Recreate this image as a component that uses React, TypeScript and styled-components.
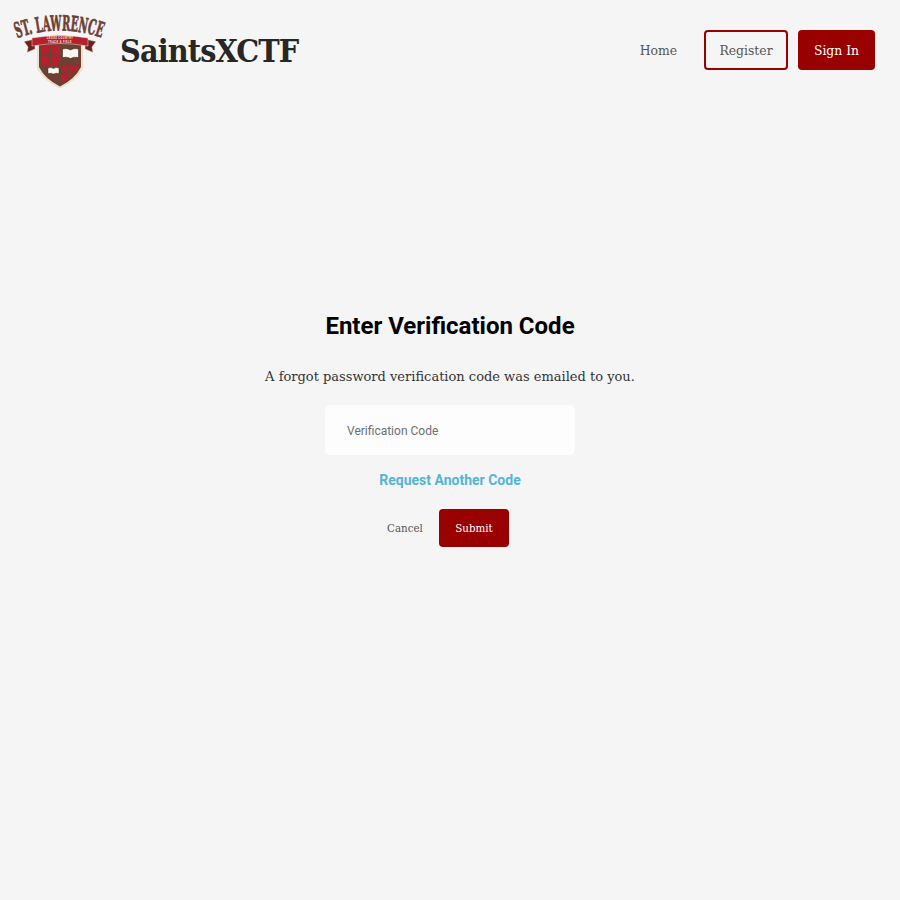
import React from "react";
import styled, { createGlobalStyle } from "styled-components";

const Global = createGlobalStyle`
  html, body { margin: 0; padding: 0; background: #f5f5f5; }
  #root { min-height: 900px; }
`;
const slab = `"DejaVu Serif", "Liberation Serif", serif`;

const Page = styled.div`
  width: 900px;
  height: 900px;
  background: #f5f5f5;
  display: flex;
  flex-direction: column;
`;
const Header = styled.header`
  height: 100px;
  display: flex;
  align-items: center;
  padding: 0 25px 0 15px;
  box-sizing: border-box;
`;
const Brand = styled.div`
  display: flex;
  align-items: center;
  gap: 15px;
  flex: 1;
`;
const LogoSvg = styled.svg`
  width: 90px;
  height: 76px;
  display: block;
  overflow: visible;
`;
const Title = styled.h1`
  margin: 2px 0 0;
  font: 700 32px/1 "DejaVu Serif Condensed", ${slab};
  color: #272727;
  letter-spacing: -0.9px;
`;
const Nav = styled.nav`
  display: flex;
  align-items: center;
  gap: 10px;
`;
const NavButton = styled.button<{ $variant: "plain" | "outline" | "solid" }>`
  height: 40px;
  box-sizing: border-box;
  border-radius: 4px;
  font: 400 12.4px/1 ${slab};
  padding: ${(p) => (p.$variant === "plain" ? "2px 0 0 3px" : "2px 0 0")};
  width: ${(p) => (p.$variant === "plain" ? "74px" : p.$variant === "outline" ? "84px" : "77px")};
  background: ${(p) => (p.$variant === "solid" ? "#990000" : "transparent")};
  color: ${(p) => (p.$variant === "solid" ? "#fff" : "#555")};
  border: ${(p) => (p.$variant === "outline" ? "2px solid #990000" : "none")};
`;
const Main = styled.main`
  display: flex;
  flex-direction: column;
  align-items: center;
  padding-top: 212px;
`;
const Heading = styled.h2`
  margin: 0;
  height: 28px;
  font: 700 24px/28px Roboto, sans-serif;
  color: #000;
`;
const Message = styled.p`
  margin: 27px 0 0;
  height: 20px;
  font: 400 13px/20px ${slab};
  color: #333;
`;
const CodeInput = styled.input`
  margin-top: 18px;
  width: 250px;
  height: 50px;
  box-sizing: border-box;
  border: none;
  outline: none;
  border-radius: 5px;
  background: #fdfdfd;
  padding: 1px 22px 0;
  font: 400 12px Roboto, sans-serif;
  color: #555;
  &::placeholder { color: #6f6f6f; opacity: 1; }
`;
const Resend = styled.a`
  margin-top: 16px;
  height: 18px;
  font: 700 14px/18px Roboto, sans-serif;
  color: #56b4d3;
  cursor: pointer;
`;
const Actions = styled.div`
  margin-top: 20px;
  padding-right: 4px;
  display: flex;
  align-items: center;
  gap: 16px;
`;
const CancelButton = styled.button`
  border: none;
  background: none;
  padding: 1px 0 0;
  width: 36px;
  font: 400 10.3px/1 ${slab};
  color: #555;
  white-space: nowrap;
  display: flex;
  justify-content: center;
`;
const SubmitButton = styled.button`
  width: 70px;
  height: 38px;
  border: none;
  border-radius: 4px;
  background: #990000;
  color: #fff;
  padding: 0;
  font: 400 10.3px/1 ${slab};
`;

const Logo = () => (
  <LogoSvg viewBox="0 0 90 76" aria-label="St. Lawrence Cross Country Track and Field">
    <defs>
      <path id="arc" d="M2 26 Q45 11 88 26" fill="none" />
    </defs>
    {/* shield */}
    <path d="M22 28 H68 V56 Q62 69 45 76.500 Q28 69 22 56 Z" fill="#efe0c6" />
    <path d="M24 29 H66 V55 Q60 67 45 74.500 Q30 67 24 55 Z" fill="#6d4034" />
    <path d="M26 33 H45 V53 H26 Z" fill="#b5202f" />
    <path d="M46 54 H64 V55 Q59 65 46 71 Z" fill="#b5202f" />
    <path d="M35 36 V50 M29 43 H41" stroke="#6d4034" strokeWidth="2.2" strokeLinecap="round" />
    <path d="M33 41 H37 V45 H33 Z" fill="#6d4034" />
    <path d="M53 55.500 V67 M47.500 60.500 H59" stroke="#6d4034" strokeWidth="1.800" strokeLinecap="round" />
    {/* books */}
    <path d="M47.500 37 Q52 35.500 55.500 38 Q59 35.500 63.500 37 V45.500 Q59 44.500 55.500 46.500 Q52 44.500 47.500 45.500 Z" fill="#fbf8f2" stroke="#2e1a14" strokeWidth=".5" />
    <path d="M33 56 Q36 55 38.500 56.500 Q41 55 44 56 V61.500 Q41 60.800 38.500 62 Q36 60.800 33 61.500 Z" fill="#fbf8f2" stroke="#2e1a14" strokeWidth=".4" />
    {/* ribbon */}
    <path d="M9 29.500 L20 27 V37 L12 40.500 L13 35 Z" fill="#6f1f20" stroke="#efe0c6" strokeWidth=".5" />
    <path d="M81 29.500 L70 27 V37 L78 40.500 L77 35 Z" fill="#6f1f20" stroke="#efe0c6" strokeWidth=".5" />
    <path d="M17 26 Q45 21 73 26 V34 Q45 29 17 34 Z" fill="#b5202f" stroke="#efe0c6" strokeWidth=".5" />
    <text fontFamily="Roboto, sans-serif" fontWeight="700" fontSize="2.600" fill="#f5e3d8" textAnchor="middle" x="45" y="27" letterSpacing=".45">
      CROSS COUNTRY
    </text>
    <text fontFamily="Roboto, sans-serif" fontWeight="700" fontSize="2.600" fill="#f5e3d8" textAnchor="middle" x="45" y="30.500" letterSpacing=".45">
      TRACK &amp; FIELD
    </text>
    <text fontFamily="'DejaVu Serif Condensed', 'DejaVu Serif', serif" fontWeight="700" fontSize="21" fill="#6d4034" stroke="#6d4034" strokeWidth=".7">
      <textPath href="#arc" textLength="86" lengthAdjust="spacingAndGlyphs">ST. LAWRENCE</textPath>
    </text>
  </LogoSvg>
);

export default function App() {
  return (
    <Page>
      <Global />
      <Header>
        <Brand>
          <Logo />
          <Title>SaintsXCTF</Title>
        </Brand>
        <Nav>
          <NavButton $variant="plain">Home</NavButton>
          <NavButton $variant="outline">Register</NavButton>
          <NavButton $variant="solid">Sign In</NavButton>
        </Nav>
      </Header>
      <Main>
        <Heading>Enter Verification Code</Heading>
        <Message>A forgot password verification code was emailed to you.</Message>
        <CodeInput placeholder="Verification Code" />
        <Resend>Request Another Code</Resend>
        <Actions>
          <CancelButton>Cancel</CancelButton>
          <SubmitButton>Submit</SubmitButton>
        </Actions>
      </Main>
    </Page>
  );
}
